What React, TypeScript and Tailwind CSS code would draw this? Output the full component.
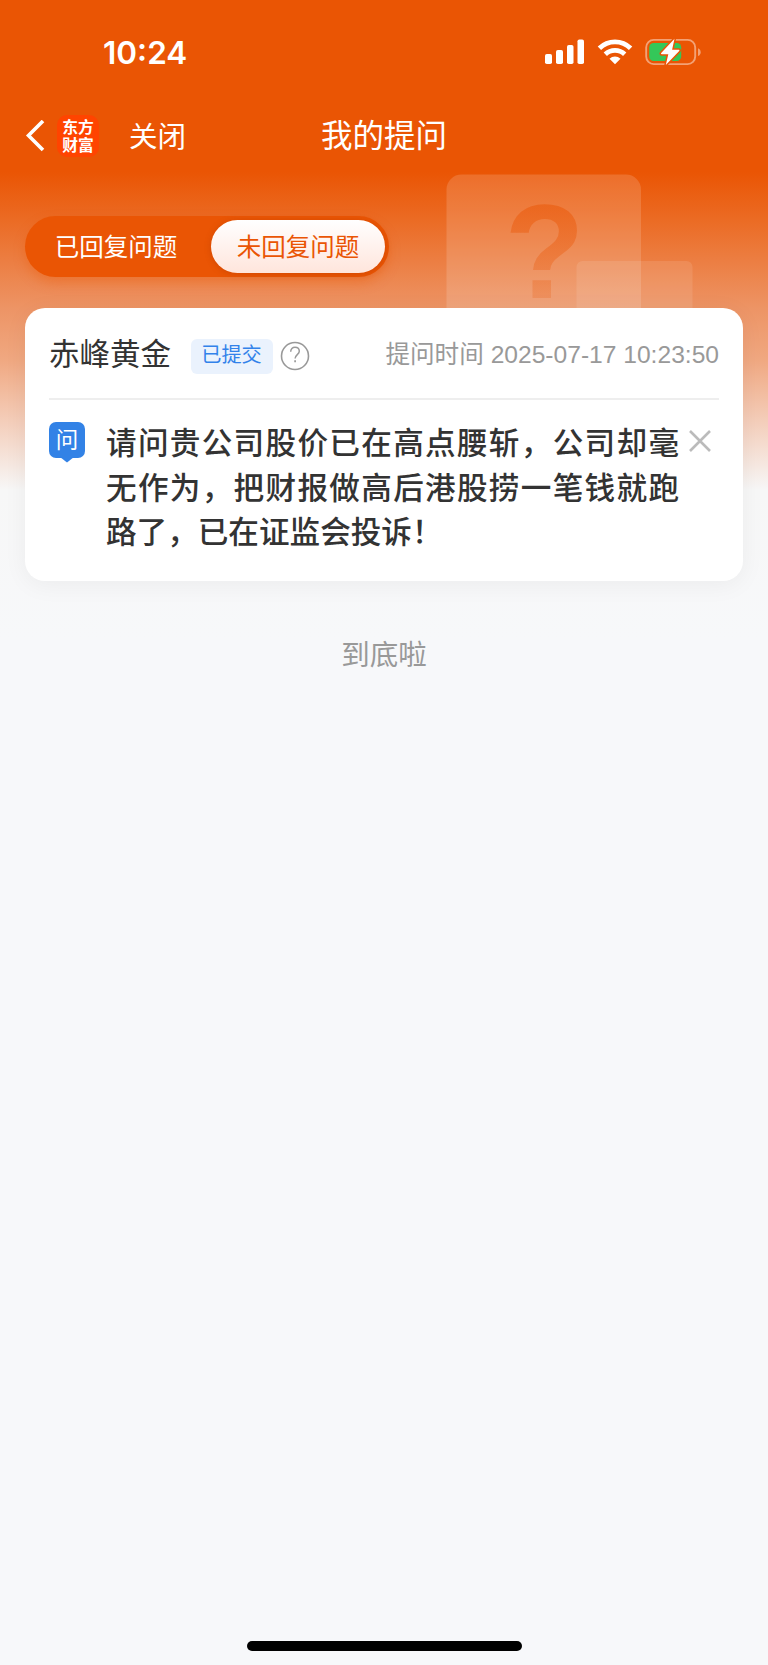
import React from 'react';

interface TabItem {
  key: string;
  label: string;
}

interface Question {
  company: string;
  status: string;
  askedAt: string;
  content: string;
}

const tabs: TabItem[] = [
  { key: 'answered', label: '已回复问题' },
  { key: 'pending', label: '未回复问题' },
];

const questions: Question[] = [
  {
    company: '赤峰黄金',
    status: '已提交',
    askedAt: '2025-07-17 10:23:50',
    content: '请问贵公司股价已在高点腰斩，公司却毫无作为，把财报做高后港股捞一笔钱就跑路了，已在证监会投诉！',
  },
];

const StatusBar: React.FC = () => (
  <div className="flex h-[104px] items-center justify-between pl-[103px] pr-[67px]">
    <span className="mt-0.5 font-['Inter',sans-serif] text-[31.5px] font-semibold leading-none text-white">10:24</span>
    <div className="flex items-center gap-3">
      <svg width="40" height="26" viewBox="0 0 40 26" fill="#fff">
        <rect x="0" y="15" width="7" height="10" rx="1.8" />
        <rect x="11" y="11" width="7" height="14" rx="1.8" />
        <rect x="22" y="6" width="6.5" height="19" rx="1.8" />
        <rect x="32.5" y="0.5" width="6.5" height="24.5" rx="1.8" />
      </svg>
      <svg width="36" height="26" viewBox="0 0 36 26" fill="none" stroke="#fff" strokeWidth="4.8">
        <path d="M2.4 9.2a22.3 22.3 0 0 1 31.2 0" />
        <path d="M8.3 15.2a14 14 0 0 1 19.4 0" />
        <path d="M18 25.3l-5.5-5.6a8 8 0 0 1 11 0z" fill="#fff" stroke="none" />
      </svg>
      <svg width="56" height="28" viewBox="0 0 56 28" fill="none">
        <rect x="1.2" y="1.9" width="49" height="24.2" rx="7.5" stroke="#fff" strokeOpacity=".45" strokeWidth="1.9" />
        <path d="M53 10.2c3.6 1.3 3.6 6.6 0 7.9z" fill="#fff" fillOpacity=".45" />
        <rect x="4.2" y="5" width="32" height="18" rx="4.5" fill="#34c759" />
        <path
          d="M29.5.8L16.2 15c-.5.6-.1 1.2.5 1.2h6.6L20.800 27 34.200 12.900c.5-.6.1-1.200-.5-1.200h-6.600z"
          fill="#fff"
          stroke="#ea5504"
          strokeWidth="3"
          paintOrder="stroke"
        />
      </svg>
    </div>
  </div>
);

const NavBar: React.FC = () => (
  <div className="relative flex h-16 items-center pl-[25px]">
    <svg width="20" height="32" viewBox="0 0 20 32" fill="none" stroke="#fff" strokeWidth="3.6">
      <path d="M18 1L3.500 15.500 18 30" />
    </svg>
    <div className="ml-3 flex h-[42px] w-[42px] items-center justify-center rounded-[10px] bg-[#ff4400] pb-px font-['Noto_Sans_CJK_SC',sans-serif] text-[15.8px] font-bold leading-[17.5px] text-white">
      <span className="block text-center">
        东方
        <br />
        财富
      </span>
    </div>
    <button className="ml-[30px] mt-0.5 text-[28.5px] leading-none text-white">关闭</button>
    <h1 className="absolute left-1/2 -translate-x-1/2 pt-0.5 text-[31.5px] leading-none text-white">我的提问</h1>
  </div>
);

const Decoration: React.FC = () => (
  <svg className="absolute left-[446px] top-[174px]" width="250" height="180" viewBox="0 0 250 180">
    <defs>
      <linearGradient id="mark" x1="0" y1="0" x2="0" y2="1">
        <stop offset="0" stopColor="#ea5504" stopOpacity=".6" />
        <stop offset="1" stopColor="#ea5504" stopOpacity=".12" />
      </linearGradient>
    </defs>
    <rect x=".5" y=".5" width="194.5" height="179" rx="15" fill="#fff" fillOpacity=".15" />
    <text
      x="58.5"
      y="123.5"
      fontFamily="Liberation Sans"
      fontWeight="700"
      fontSize="134"
      textLength="80"
      lengthAdjust="spacingAndGlyphs"
      fill="url(#mark)"
    >
      ?
    </text>
    <rect x="130.5" y="87" width="116" height="90" rx="6" fill="#fff" fillOpacity=".1" />
  </svg>
);

const Tabs: React.FC<{ active: string }> = ({ active }) => (
  <div className="relative ml-[25px] mt-12 flex h-[61px] w-[364px] items-center rounded-full bg-[#ea5504] p-1 text-[24.5px] shadow-[0_6px_12px_rgba(234,85,4,0.35)]">
    {tabs.map((tab) => (
      <button
        key={tab.key}
        className={
          tab.key === active
            ? 'h-[53px] w-[174px] rounded-full bg-gradient-to-b from-white to-[#ffe5dc] pt-1 text-[#ea5504] shadow-[0_1px_6px_rgba(160,50,0,0.35)]'
            : 'h-[53px] w-[182px] rounded-full pr-2 pt-1 text-white'
        }
      >
        {tab.label}
      </button>
    ))}
  </div>
);

const QuestionCard: React.FC<{ question: Question }> = ({ question }) => (
  <div className="relative mx-[25px] mt-[31px] h-[273px] shrink-0 rounded-[20px] bg-white px-6 shadow-[0_4px_24px_rgba(0,0,0,0.05)]">
    <div className="flex h-[92px] items-center border-b-2 border-[#eeeeee]">
      <span className="pt-0.5 text-[30.5px] leading-none text-[#333]">{question.company}</span>
      <span className="ml-5 mt-[6px] flex h-[35px] w-[82px] items-center justify-center rounded-md bg-[#eaf2fd] pb-px pr-px text-[20.2px] leading-none text-[#3282ea]">
        {question.status}
      </span>
      <svg className="ml-[7px] mt-[6px]" width="30" height="30" viewBox="0 0 30 30" fill="none" stroke="#999">
        <circle cx="15" cy="15" r="13.5" strokeWidth="1.6" />
        <path d="M10.7 10.800c0-2.800 1.800-4.600 4.300-4.600s4.300 1.600 4.300 4c0 3.300-4.200 3.600-4.200 7.300" strokeWidth="1.5" />
        <path d="M15.1 19.300v2" strokeWidth="1.7" />
      </svg>
      <span className="ml-auto pt-1 text-[24.6px] leading-none text-[#999]">提问时间 {question.askedAt}</span>
    </div>
    <div className="flex pt-[21px]">
      <div className="relative mt-px h-[36px] w-9 shrink-0 rounded-[7px] bg-[#3282e6] text-center text-[22.5px] leading-[37px] text-white">
        问
        <svg className="absolute left-[11px] top-[35px]" width="14" height="6" viewBox="0 0 14 6" fill="#3282e6">
          <path d="M0 0h14L7 5.500z" />
        </svg>
      </div>
      <p className="ml-[21px] w-[573px] text-justify text-[30.6px] font-medium leading-[44.6px] text-[#333]">
        {question.content}
      </p>
      <svg className="ml-2.5 mt-[9px]" width="22" height="22" viewBox="0 0 22 22" stroke="#bbb" strokeWidth="2.6">
        <path d="M1 1l20 20M21 1L1 21" />
      </svg>
    </div>
  </div>
);

export default function App() {
  return (
    <div
      lang="zh-CN"
      className="relative flex h-[1665px] w-[768px] flex-col overflow-hidden bg-[#f7f8fa] bg-[linear-gradient(to_bottom,#ea5504_172px,#eb6b24_220px,#ed9465_308px,#f0a881_360px,#f4cdb9_420px,#f7f7f7_490px,#f7f8fa_640px)] font-['Liberation_Sans','Noto_Sans_CJK_SC',sans-serif]"
    >
      <Decoration />
      <StatusBar />
      <NavBar />
      <Tabs active="pending" />
      {questions.map((question) => (
        <QuestionCard key={question.askedAt} question={question} />
      ))}
      <p className="mt-[60px] text-center text-[28.5px] leading-none text-[#999]">到底啦</p>
      <div className="mx-auto mb-[14px] mt-auto h-[10px] w-[275px] rounded-full bg-black" />
    </div>
  );
}
